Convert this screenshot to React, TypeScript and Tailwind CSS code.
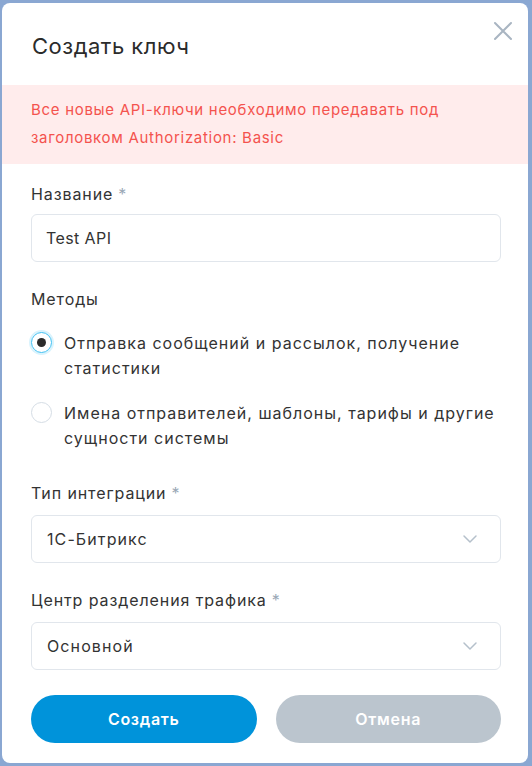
import { useState } from 'react';

const font = { fontFamily: 'Inter, "Noto Sans", sans-serif' };

function Chevron() {
  return (
    <svg width="16" height="10" viewBox="0 0 16 10" fill="none" className="shrink-0">
      <path d="M2 2l6 6 6-6" stroke="#b5c0cb" strokeWidth="1.5" strokeLinecap="round" strokeLinejoin="round" />
    </svg>
  );
}

function Label({ text, required }: { text: string; required?: boolean }) {
  return (
    <div className="text-[16px] leading-[20px] tracking-[0.9px] text-[#333]">
      {text}
      {required && <span className="ml-[5px] text-[#9aa8b6]">*</span>}
    </div>
  );
}

function Select({ value }: { value: string }) {
  return (
    <div className="mt-[12px] flex h-[48px] items-center justify-between rounded-[6px] border border-[#e1e6ec] pl-[15px] pr-[22px] text-[16px] tracking-[1.1px] text-[#333]">
      <span>{value}</span>
      <Chevron />
    </div>
  );
}

const methods = [
  'Отправка сообщений и рассылок, получение статистики',
  'Имена отправителей, шаблоны, тарифы и другие сущности системы',
];

export default function App() {
  const [method, setMethod] = useState(0);

  return (
    <div className="min-h-[766px] bg-[#8aa7d2] pl-[2px] pr-[4px] pt-[3px] pb-[3px]" style={font}>
      <div className="flex h-[760px] flex-col rounded-[8px] bg-white">
        <div className="flex items-start justify-between pl-[30px] pr-[11px] pt-[28px]">
          <h1 className="text-[22px] leading-[30px] tracking-[0.5px] text-[#2b2b2b]">Создать ключ</h1>
          <button className="mt-[-14px] p-[4px]">
            <svg width="20" height="20" viewBox="0 0 20 20" fill="none">
              <path d="M2 2l16 16M18 2L2 18" stroke="#a9b5c2" strokeWidth="2" strokeLinecap="round" />
            </svg>
          </button>
        </div>

        <div className="mt-[24px] bg-[#ffecec] pl-[29px] pr-[40px] pt-[11px] pb-[12px] text-[15px] leading-[28px] tracking-[0.7px] text-[#f4534e]">
          Все новые API-ключи необходимо передавать под заголовком Authorization: Basic
        </div>

        <div className="pl-[29px] pr-[27px] pt-[20px]">
          <Label text="Название" required />
          <div className="mt-[10px] flex h-[48px] items-center rounded-[6px] border border-[#e1e6ec] px-[14px] text-[16px] tracking-[0.4px] text-[#333]">
            Test API
          </div>

          <div className="mt-[27px]">
            <Label text="Методы" />
          </div>
          <div className="mt-[22px] flex flex-col gap-[20px]">
            {methods.map((m, i) => (
              <label key={m} className="-mr-[12px] flex cursor-pointer items-start gap-[12px]" onClick={() => setMethod(i)}>
                <span
                  className={
                    method === i
                      ? 'mt-[1px] flex h-[21px] w-[21px] shrink-0 items-center justify-center rounded-full border-[1.5px] border-[#3fc0f2] shadow-[0_0_0_2px_#d9f3fd]'
                      : 'mt-[1px] flex h-[21px] w-[21px] shrink-0 items-center justify-center rounded-full border border-[#d5dde5]'
                  }
                >
                  {method === i && <span className="h-[9px] w-[9px] rounded-full bg-[#2b2b2b]" />}
                </span>
                <span className="text-[16px] leading-[25px] tracking-[1px] text-[#333]">{m}</span>
              </label>
            ))}
          </div>

          <div className="mt-[32px]">
            <Label text="Тип интеграции" required />
          </div>
          <Select value="1С-Битрикс" />

          <div className="mt-[27px]">
            <Label text="Центр разделения трафика" required />
          </div>
          <Select value="Основной" />

          <div className="mt-[25px] flex gap-[19px]">
            <button className="h-[48px] flex-1 rounded-full bg-[#0093da] text-[16px] font-semibold tracking-[0.7px] text-white">
              Создать
            </button>
            <button className="h-[48px] flex-1 rounded-full bg-[#bbc5ce] text-[16px] font-semibold tracking-[0.7px] text-white">
              Отмена
            </button>
          </div>
        </div>
      </div>
    </div>
  );
}
